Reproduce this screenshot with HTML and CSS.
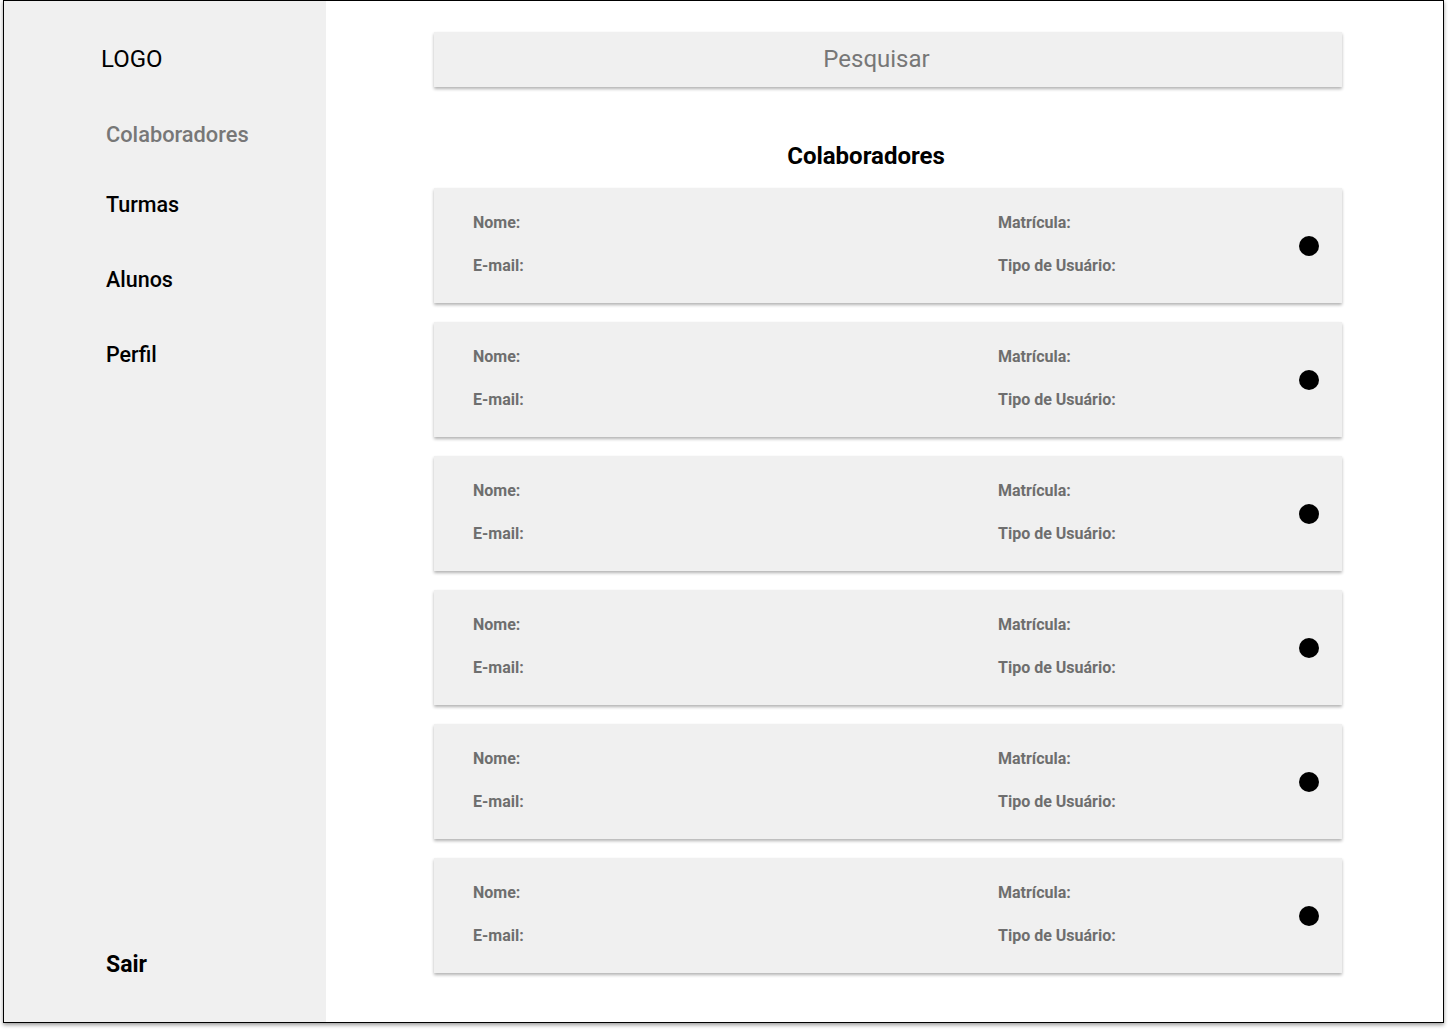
FILE: index.html
```html
<!DOCTYPE html>
<html lang="pt">
<head>
<meta charset="utf-8">
<title>Colaboradores</title>
<link rel="stylesheet" href="styles.css">
</head>
<body>
<div class="frame">
  <aside class="sidebar">
    <div class="logo">LOGO</div>
    <nav class="nav">
      <a class="nav-item active">Colaboradores</a>
      <a class="nav-item">Turmas</a>
      <a class="nav-item">Alunos</a>
      <a class="nav-item">Perfil</a>
    </nav>
    <a class="logout">Sair</a>
  </aside>
  <main class="content">
    <div class="search">Pesquisar</div>
    <h1 class="title">Colaboradores</h1>
    <div class="list">
      <div class="card">
        <span class="label l1">Nome:</span><span class="label r1">Matrícula:</span>
        <span class="dot"></span>
        <span class="label l2">E-mail:</span><span class="label r2">Tipo de Usuário:</span>
      </div>
      <div class="card">
        <span class="label l1">Nome:</span><span class="label r1">Matrícula:</span>
        <span class="dot"></span>
        <span class="label l2">E-mail:</span><span class="label r2">Tipo de Usuário:</span>
      </div>
      <div class="card">
        <span class="label l1">Nome:</span><span class="label r1">Matrícula:</span>
        <span class="dot"></span>
        <span class="label l2">E-mail:</span><span class="label r2">Tipo de Usuário:</span>
      </div>
      <div class="card">
        <span class="label l1">Nome:</span><span class="label r1">Matrícula:</span>
        <span class="dot"></span>
        <span class="label l2">E-mail:</span><span class="label r2">Tipo de Usuário:</span>
      </div>
      <div class="card">
        <span class="label l1">Nome:</span><span class="label r1">Matrícula:</span>
        <span class="dot"></span>
        <span class="label l2">E-mail:</span><span class="label r2">Tipo de Usuário:</span>
      </div>
      <div class="card">
        <span class="label l1">Nome:</span><span class="label r1">Matrícula:</span>
        <span class="dot"></span>
        <span class="label l2">E-mail:</span><span class="label r2">Tipo de Usuário:</span>
      </div>
    </div>
  </main>
</div>
</body>
</html>
```
FILE: styles.css
```css
* { box-sizing: border-box; }
html, body { margin: 0; padding: 0; background: #fff; }
body {
  font-family: Roboto, "Liberation Sans", sans-serif;
  color: #000;
  width: 1448px;
  height: 1032px;
  overflow: hidden;
}
.frame {
  margin-left: 3px;
  width: 1441px;
  height: 1023px;
  border: 1px solid #000;
  display: flex;
  box-shadow: 0 2px 4px rgba(0, 0, 0, 0.4);
  background: #fff;
}
.sidebar {
  width: 322px;
  flex: none;
  background: #f0f0f0;
  display: flex;
  flex-direction: column;
  padding: 44px 0 43px 97px;
}
.logo {
  font-size: 24px;
  line-height: 28px;
  font-weight: 400;
}
.nav {
  display: flex;
  flex-direction: column;
  margin-top: 50px;
  margin-left: 5px;
  gap: 51px;
}
.nav-item {
  font-size: 21.5px;
  line-height: 24px;
  font-weight: 500;
  color: #000;
}
.nav-item.active {
  font-size: 21.8px;
  color: #777;
  margin-bottom: -5px;
}
.logout {
  margin-top: auto;
  margin-left: 5px;
  font-size: 23px;
  line-height: 28px;
  font-weight: 700;
}
.content {
  flex: 1;
  padding: 31px 101px 0 108px;
}
.search {
  height: 55px;
  background: #f0f0f0;
  box-shadow: 0 2px 3px rgba(0, 0, 0, 0.3);
  color: #777;
  font-size: 24px;
  line-height: 55px;
  text-align: center;
  padding-right: 23px;
}
.title {
  margin: 55px 0 18px;
  font-size: 24px;
  line-height: 28px;
  font-weight: 700;
  text-align: center;
  padding-right: 44px;
}
.list {
  display: flex;
  flex-direction: column;
  gap: 19px;
}
.card {
  height: 115px;
  background: #f0f0f0;
  box-shadow: 0 2px 3px rgba(0, 0, 0, 0.3);
  display: grid;
  grid-template-columns: 525px 1fr 20px;
  grid-template-rows: 18px 18px;
  row-gap: 25px;
  align-content: start;
  padding: 26px 23px 0 39px;
}
.label {
  font-size: 16px;
  line-height: 18px;
  font-weight: 700;
  color: #6e6e6e;
}
.l1 { grid-column: 1; grid-row: 1; }
.r1 { grid-column: 2; grid-row: 1; }
.l2 { grid-column: 1; grid-row: 2; }
.r2 { grid-column: 2; grid-row: 2; }
.dot {
  grid-column: 3;
  grid-row: 1 / 3;
  align-self: center;
  margin-top: 2px;
  width: 20px;
  height: 20px;
  border-radius: 50%;
  background: #000;
}
```
